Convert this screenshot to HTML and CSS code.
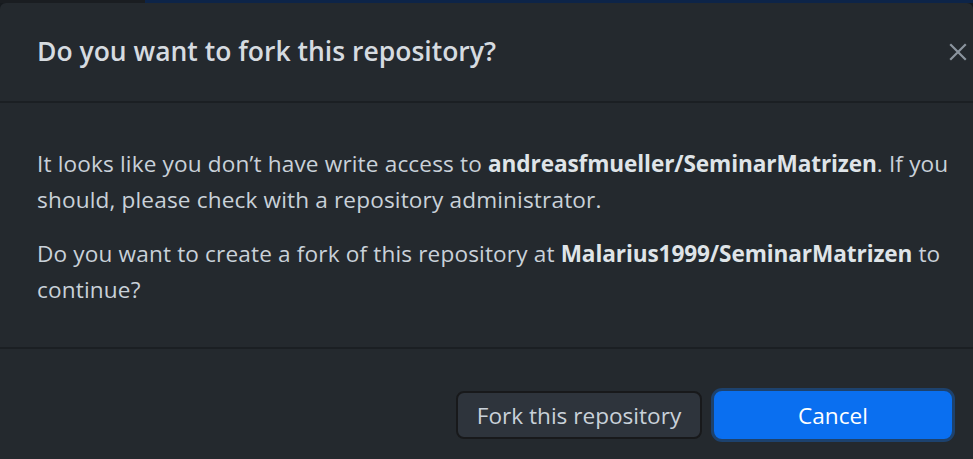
FILE: index.html
```html
<!DOCTYPE html>
<html lang="en">
<head>
<meta charset="utf-8">
<title>Fork repository</title>
<link rel="stylesheet" href="styles.css">
</head>
<body>
<div class="topbar"><div class="topbar-left"></div><div class="topbar-right"></div></div>
<div class="dialog">
  <header class="dialog-header">
    <h1 class="dialog-title">Do you want to fork this repository?</h1>
    <button class="close" aria-label="Close">
      <svg width="18" height="18" viewBox="0 0 18 18"><path d="M2 2 L16 16 M16 2 L2 16" stroke="#8b949e" stroke-width="2.2" stroke-linecap="square" fill="none"/></svg>
    </button>
  </header>
  <section class="dialog-body">
    <p>It looks like you don’t have write access to <strong>andreasfmueller/SeminarMatrizen</strong>. If you should, please check with a repository administrator.</p>
    <p>Do you want to create a fork of this repository at <strong>Malarius1999/SeminarMatrizen</strong> to continue?</p>
  </section>
  <footer class="dialog-footer">
    <button class="btn btn-secondary">Fork this repository</button>
    <button class="btn btn-primary">Cancel</button>
  </footer>
</div>
</body>
</html>
```
FILE: styles.css
```css
* {
  box-sizing: border-box;
}
html, body {
  margin: 0;
  padding: 0;
  height: 100%;
  overflow: hidden;
  background: #161a1e;
}
body {
  font-family: "Open Sans", "Noto Sans", sans-serif;
  color: #c9d1d9;
}
.topbar {
  display: flex;
  height: 3px;
}
.topbar-left {
  width: 145px;
  background: #1a1d21;
}
.topbar-right {
  flex: 1;
  background: #0d2448;
}
.dialog {
  background: #24292e;
  border-radius: 6px 6px 0 0;
  height: 456px;
  display: flex;
  flex-direction: column;
}
.dialog-header {
  height: 100px;
  flex: none;
  display: flex;
  align-items: center;
  justify-content: space-between;
  padding: 0 6px 0 37px;
  border-bottom: 2px solid #1b1f23;
}
.dialog-title {
  margin: 0;
  font-size: 26.5px;
  font-weight: 600;
  color: #d6dbe0;
  letter-spacing: 0;
  padding-bottom: 2px;
}
.close {
  background: none;
  border: none;
  padding: 0;
  width: 18px;
  height: 18px;
  display: flex;
}
.dialog-body {
  height: 246px;
  flex: none;
  padding: 43px 20px 0 37px;
  border-bottom: 2px solid #1b1f23;
  font-size: 22.6px;
  line-height: 36px;
  letter-spacing: 0.15px;
  color: #c9d1d9;
}
.dialog-body p {
  margin: 0 0 18px 0;
}
.dialog-body strong {
  font-weight: 700;
  color: #dfe4e8;
  letter-spacing: -0.1px;
}
.dialog-footer {
  display: flex;
  justify-content: flex-end;
  gap: 12px;
  padding: 42px 21px 0 0;
}
.btn {
  font-family: inherit;
  font-size: 22.6px;
  height: 48px;
  border-radius: 8px;
  padding: 0;
}
.btn-secondary {
  width: 246px;
  background: #2e343c;
  border: 2px solid #18191b;
  color: #c9d1d9;
}
.btn-primary {
  width: 238px;
  background: #0a6ff0;
  border: 2px solid #0a6ff0;
  color: #ffffff;
  box-shadow: 0 0 0 3px #1d426e;
}
```
